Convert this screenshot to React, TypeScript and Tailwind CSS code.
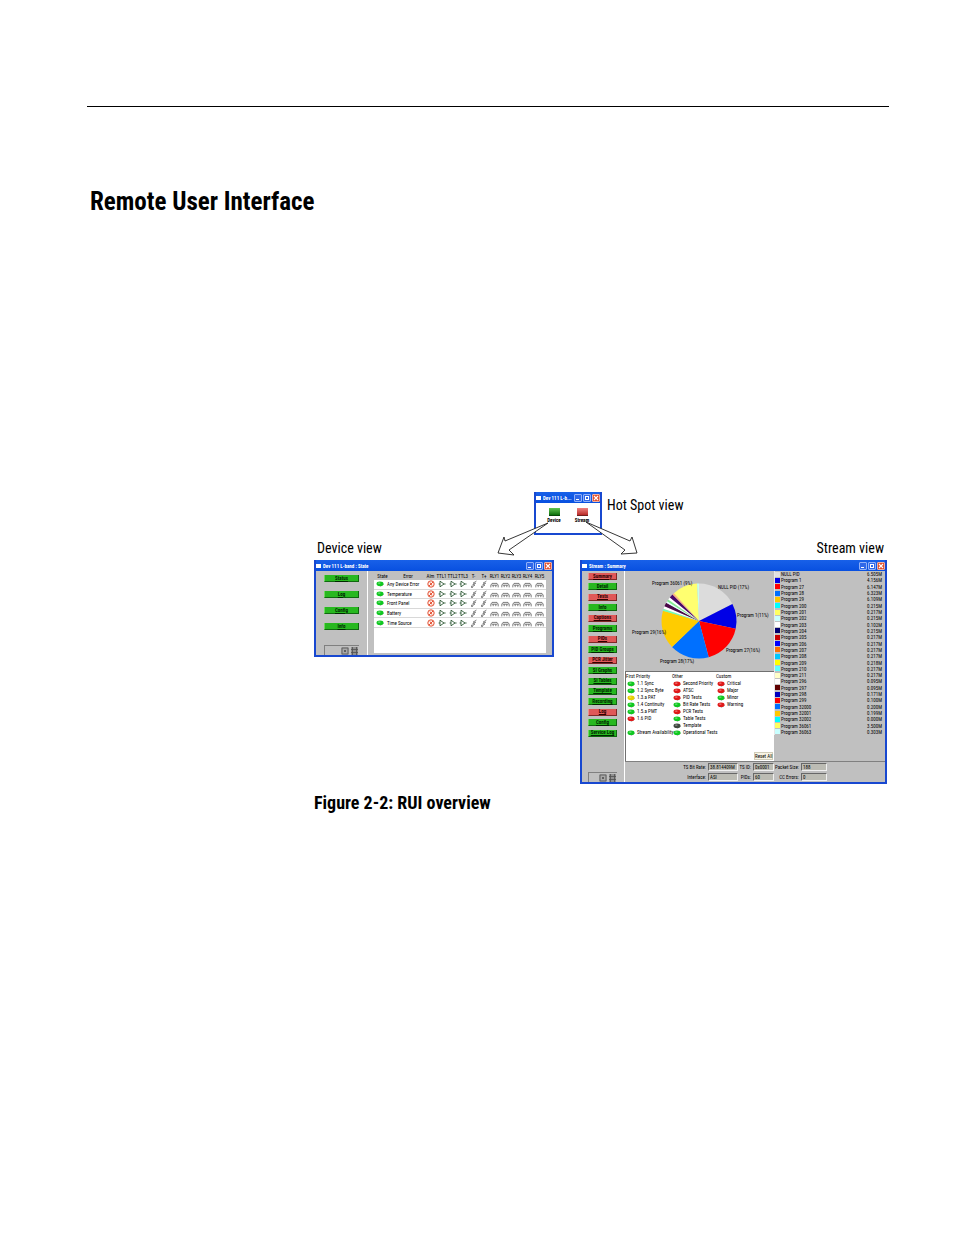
import type { ReactNode } from "react";

const legend = [
  { name: "NULL PID", rate: "6.505M", color: "#e0e0e0" },
  { name: "Program 1", rate: "4.156M", color: "#0000e6" },
  { name: "Program 27", rate: "6.147M", color: "#ff0000" },
  { name: "Program 28", rate: "6.323M", color: "#0070ff" },
  { name: "Program 29", rate: "6.109M", color: "#ffc800" },
  { name: "Program 200", rate: "0.215M", color: "#00ffff" },
  { name: "Program 201", rate: "0.217M", color: "#ffff60" },
  { name: "Program 202", rate: "0.215M", color: "#c8ffff" },
  { name: "Program 203", rate: "0.102M", color: "#ffffff" },
  { name: "Program 204", rate: "0.215M", color: "#000070" },
  { name: "Program 205", rate: "0.217M", color: "#c80000" },
  { name: "Program 206", rate: "0.217M", color: "#0000ff" },
  { name: "Program 207", rate: "0.217M", color: "#ff7000" },
  { name: "Program 208", rate: "0.217M", color: "#00c8ff" },
  { name: "Program 209", rate: "0.218M", color: "#ffff00" },
  { name: "Program 210", rate: "0.217M", color: "#60ffff" },
  { name: "Program 211", rate: "0.217M", color: "#ffffc8" },
  { name: "Program 296", rate: "0.095M", color: "#ffffff" },
  { name: "Program 297", rate: "0.095M", color: "#600000" },
  { name: "Program 298", rate: "0.171M", color: "#0000c0" },
  { name: "Program 299", rate: "0.100M", color: "#ff0000" },
  { name: "Program 32000", rate: "0.200M", color: "#0070ff" },
  { name: "Program 32001", rate: "0.199M", color: "#ffc800" },
  { name: "Program 32002", rate: "0.000M", color: "#00ffff" },
  { name: "Program 36061", rate: "3.500M", color: "#ffff60" },
  { name: "Program 36063", rate: "0.303M", color: "#c8ffff" },
];

// start and end angle in degrees, clockwise from twelve o'clock
const slices: [number, number, string][] = [
  [0, 63, "#dcdcdc"],
  [63, 102, "#0000e6"],
  [102, 165, "#ff0000"],
  [165, 226, "#0070ff"],
  [226, 286, "#ffcc00"],
  [286, 289, "#70ffb0"],
  [289, 293, "#ffffff"],
  [293, 299, "#4a0848"],
  [299, 302, "#e8ffff"],
  [302, 305, "#80f090"],
  [305, 309, "#ffffff"],
  [309, 315, "#4a0868"],
  [315, 318, "#ffb080"],
  [318, 357, "#ffff70"],
  [357, 360, "#c8ffe8"],
];

const pieLabels = [
  { x: 27, y: 14, text: "Program 36061 (9%)" },
  { x: 93, y: 18, text: "NULL PID (17%)" },
  { x: 112, y: 46, text: "Program 1(11%)" },
  { x: 101, y: 81, text: "Program 27(16%)" },
  { x: 35, y: 92, text: "Program 28(17%)" },
  { x: 7, y: 63, text: "Program 29(16%)" },
];

const streamMenu = [
  { label: "Summary", alarm: true },
  { label: "Detail" },
  { label: "Tests", alarm: true },
  { label: "Info" },
  { label: "Captions", alarm: true },
  { label: "Programs" },
  { label: "PIDs", alarm: true },
  { label: "PID Groups" },
  { label: "PCR Jitter", alarm: true },
  { label: "SI Graphs" },
  { label: "SI Tables" },
  { label: "Template" },
  { label: "Recording" },
  { label: "Log", alarm: true },
  { label: "Config" },
  { label: "Service Log" },
];

const lamps = {
  green: "#10c820",
  red: "#e01818",
  yellow: "#e8d000",
  off: "#404840",
};

type LampColor = keyof typeof lamps;

const tests: { title: string; items: ([string, LampColor] | null)[] }[] = [
  {
    title: "First Priority",
    items: [
      ["1.1 Sync", "green"],
      ["1.2 Sync Byte", "green"],
      ["1.3.a PAT", "yellow"],
      ["1.4 Continuity", "green"],
      ["1.5.a PMT", "green"],
      ["1.6 PID", "red"],
      null,
      ["Stream Availability", "green"],
    ],
  },
  {
    title: "Other",
    items: [
      ["Second Priority", "red"],
      ["ATSC", "red"],
      ["PID Tests", "red"],
      ["Bit Rate Tests", "green"],
      ["PCR Tests", "red"],
      ["Table Tests", "green"],
      ["Template", "off"],
      ["Operational Tests", "green"],
    ],
  },
  {
    title: "Custom",
    items: [
      ["Critical", "red"],
      ["Major", "red"],
      ["Minor", "green"],
      ["Warning", "red"],
    ],
  },
];

const errors = ["Any Device Error", "Temperature", "Front Panel", "Battery", "Time Source"];

const deviceColumns = [
  { label: "State", width: "w-[17px]" },
  { label: "Error", width: "w-[34px]" },
  { label: "Alm", width: "w-[11px]" },
  { label: "TTL1", width: "w-[11px]" },
  { label: "TTL2", width: "w-[11px]" },
  { label: "TTL3", width: "w-[10px]" },
  { label: "T-", width: "w-[11px]" },
  { label: "T+", width: "w-[10px]" },
  { label: "RLY1", width: "w-[11px]" },
  { label: "RLY2", width: "w-[11px]" },
  { label: "RLY3", width: "w-[11px]" },
  { label: "RLY4", width: "w-[11px]" },
  { label: "RLY5", width: "w-[13px]" },
];

const fields = [
  { id: "bitrate", label: "TS Bit Rate:", value: "38.814409M" },
  { id: "tsid", label: "TS ID:", value: "0x0001" },
  { id: "packet", label: "Packet Size:", value: "188" },
  { id: "interface", label: "Interface:", value: "ASI" },
  { id: "pids", label: "PIDs:", value: "60" },
  { id: "cc", label: "CC Errors:", value: "0" },
];

function slicePath(from: number, to: number, cx: number, cy: number, r: number) {
  const at = (deg: number) => {
    const a = (deg * Math.PI) / 180;
    return `${(cx + r * Math.sin(a)).toFixed(2)} ${(cy - r * Math.cos(a)).toFixed(2)}`;
  };
  return `M${cx} ${cy}L${at(from)}A${r} ${r} 0 0 1 ${at(to)}Z`;
}

function Lamp({ color }: { color: LampColor }) {
  return (
    <svg viewBox="0 0 8 6" className="w-2 h-[6px] shrink-0">
      <path d="M1 3.4L4.4 5.8L7.6 3.8L7.6 3L4 1Z" fill="#505850" opacity="0.6" />
      <ellipse cx="4" cy="2.8" rx="3.5" ry="2.3" fill={lamps[color]} />
      <ellipse cx="3.2" cy="2.1" rx="1.5" ry="0.7" fill="#fff" opacity="0.45" />
    </svg>
  );
}

function AlarmIcon() {
  return (
    <svg viewBox="0 0 8 8" className="w-2 h-2 mx-auto" fill="none" stroke="#e04020" strokeWidth="0.9">
      <circle cx="4" cy="4" r="3.2" fill="#fff4ee" />
      <path d="M2 6L6 2M3 2.5L5 5.5" />
    </svg>
  );
}

function GateIcon() {
  return (
    <svg viewBox="0 0 8 8" className="w-2 h-2 mx-auto" fill="none" stroke="#184820" strokeWidth="0.8">
      <path d="M2 1.2L6 4L2 6.8ZM0.6 4H2M6 4H7.6" />
    </svg>
  );
}

function BoltIcon() {
  return (
    <svg viewBox="0 0 8 8" className="w-2 h-2 mx-auto" fill="none" stroke="#707070" strokeWidth="0.8">
      <path d="M6.5 1L3 3.2H5.8L2.5 5H5L1.5 7.4M1.5 7.4V5.8M1.5 7.4H3" />
    </svg>
  );
}

function RelayIcon() {
  return (
    <svg viewBox="0 0 9 8" className="w-[9px] h-2 mx-auto" fill="none" stroke="#606060" strokeWidth="0.8">
      <path d="M0.8 7.4V5.2L2 3.4H7L8.2 5.2V7.4M1.6 5.2H7.4M3.2 5.2V7.2M5.8 5.2V7.2" />
    </svg>
  );
}

function WindowButtons() {
  return (
    <div className="flex gap-px">
      <button aria-label="Minimize" className="w-2 h-2 border border-[#90b0f8] bg-[#3068e8] rounded-[1px] flex items-end p-px">
        <span className="w-[3px] h-px bg-white" />
      </button>
      <button aria-label="Maximize" className="w-2 h-2 border border-[#90b0f8] bg-[#3068e8] rounded-[1px] p-px">
        <span className="block h-full border border-white" />
      </button>
      <button aria-label="Close" className="w-2 h-2 border border-[#f0b0a0] bg-[#e05030] rounded-[1px]">
        <svg viewBox="0 0 6 6" className="w-full h-full" stroke="#fff" strokeWidth="1.1">
          <path d="M1 1L5 5M5 1L1 5" />
        </svg>
      </button>
    </div>
  );
}

function Window({ title, className, children }: { title: string; className: string; children: ReactNode }) {
  return (
    <section className={`flex flex-col border-2 border-t-0 border-[#1848d0] text-[5px] leading-[6px] ${className}`}>
      <header className="h-[11px] shrink-0 flex items-center gap-[2px] bg-linear-to-b from-[#1860e8] to-[#0850e0] text-white">
        <span className="w-[5px] h-1 bg-white shrink-0" />
        <h2 className="flex-1 font-bold whitespace-nowrap">{title}</h2>
        <WindowButtons />
      </header>
      {children}
    </section>
  );
}

function MenuButton({ label, alarm }: { label: string; alarm?: boolean }) {
  return (
    <button
      className={`block w-full h-[7px] leading-[5px] font-bold underline text-center whitespace-nowrap border border-t-0 ${
        alarm
          ? "bg-[#e05858] border-[#802828] border-l-[#f09090] text-[#300000]"
          : "bg-[#28b820] border-[#106810] border-l-[#70d860] text-[#002800]"
      }`}
    >
      {label}
    </button>
  );
}

function SizeSwitch() {
  return (
    <div className="h-[10px] flex justify-end items-center gap-[2px] border-t border-l border-[#808080]">
      <svg viewBox="0 0 8 8" className="w-2 h-2">
        <path d="M0 0H8V8H0Z" fill="#a8a8a8" />
        <path d="M1 1H7V7H1ZM3 3L5 5M5 3L3 5" fill="none" stroke="#606060" />
      </svg>
      <svg viewBox="0 0 8 8" className="w-2 h-2">
        <path d="M0 0H7V8H0Z" fill="#909090" />
        <path d="M1.5 0V8M5.5 0V8M0 2.5H7M0 5.5H7" fill="none" stroke="#505050" strokeWidth="0.8" />
      </svg>
    </div>
  );
}

function HotSpotWindow() {
  return (
    <Window title="Dev 111 L-b..." className="w-[68px] h-[43px] bg-white">
      <div className="flex-1 grid grid-cols-2 px-1 pt-[5px] font-bold text-center">
        <div>
          <span className="block w-[11px] h-2 mx-auto mb-px bg-linear-to-b from-[#60c850] to-[#087008] border-b border-[#084808]" />
          Device
        </div>
        <div>
          <span className="block w-[11px] h-2 mx-auto mb-px bg-linear-to-b from-[#f08080] to-[#b82828] border-b border-[#702020]" />
          Stream
        </div>
      </div>
    </Window>
  );
}

function DeviceWindow() {
  return (
    <Window title="Dev 111 L-band : State" className="w-[240px] h-[97px] bg-[#c0c0c0]">
      <div className="flex-1 flex min-h-0">
        <nav className="w-[52px] px-2 pt-1 flex flex-col gap-[9px] border-r border-white">
          {["Status", "Log", "Config", "Info"].map((label) => (
            <MenuButton key={label} label={label} />
          ))}
          <div className="mt-auto">
            <SizeSwitch />
          </div>
        </nav>
        <div className="flex-1 ml-[6px] mr-[6px] mb-[2px] bg-white">
          <table className="table-fixed w-full h-[57px]">
            <thead>
              <tr className="bg-[#c0c0c0] h-[9px]">
                {deviceColumns.map((c) => (
                  <th key={c.label} className={`${c.width} p-0 font-normal text-center whitespace-nowrap`}>
                    {c.label}
                  </th>
                ))}
              </tr>
            </thead>
            <tbody>
              {errors.map((name) => (
                <tr key={name} className="border-b border-[#d8d8d8]">
                  <td className="p-0 pl-[2px]"><Lamp color="green" /></td>
                  <td className="p-0 whitespace-nowrap">
                    <span className="block -ml-1">{name}</span>
                  </td>
                  <td className="p-0"><AlarmIcon /></td>
                  <td className="p-0"><GateIcon /></td>
                  <td className="p-0"><GateIcon /></td>
                  <td className="p-0"><GateIcon /></td>
                  <td className="p-0"><BoltIcon /></td>
                  <td className="p-0"><BoltIcon /></td>
                  {[1, 2, 3, 4, 5].map((n) => (
                    <td key={n} className="p-0"><RelayIcon /></td>
                  ))}
                </tr>
              ))}
            </tbody>
          </table>
        </div>
      </div>
    </Window>
  );
}

function Pie() {
  return (
    <svg viewBox="0 0 149 100" className="w-[149px] h-[100px]">
      {slices.map(([from, to, color]) => (
        <path key={from} d={slicePath(from, to, 74, 50, 37.5)} fill={color} />
      ))}
      {pieLabels.map((l) => (
        <text key={l.text} x={l.x} y={l.y} fontSize="5" fill="#000">
          {l.text}
        </text>
      ))}
    </svg>
  );
}

function TestPanel() {
  return (
    <div className="flex-1 relative bg-white border-t border-l border-[#707070] pt-px grid grid-cols-[46px_44px_1fr] content-start">
      {tests.map((group) => (
        <div key={group.title} className="leading-[7px] whitespace-nowrap">
          <h3 className="h-[7px]">{group.title}</h3>
          <ul>
            {group.items.map((item, i) => (
              <li key={i} className="h-[7px] flex items-center gap-[2px] pl-px">
                {item && (
                  <>
                    <Lamp color={item[1]} />
                    {item[0]}
                  </>
                )}
              </li>
            ))}
          </ul>
        </div>
      ))}
      <button className="absolute right-px bottom-px w-[19px] h-2 leading-[6px] whitespace-nowrap bg-[#f8f4e4] border border-[#d0ccb8]">
        Reset All
      </button>
    </div>
  );
}

function StreamWindow() {
  return (
    <Window title="Stream : Summary" className="flex-1 h-[224px] bg-[#c0c0c0]">
      <div className="flex-1 flex min-h-0">
        <nav className="w-[43px] pl-[6px] pr-[7px] pt-[2px] flex flex-col border-r border-white">
          <div className="h-[164px] flex flex-col justify-between">
            {streamMenu.map((m) => (
              <MenuButton key={m.label} label={m.label} alarm={m.alarm} />
            ))}
          </div>
          <div className="mt-auto">
            <SizeSwitch />
          </div>
        </nav>
        <div className="flex-1 flex flex-col">
          <div className="flex-1 flex">
            <div className="w-[149px] flex flex-col">
              <Pie />
              <TestPanel />
            </div>
            <ul className="flex-1 h-[164px] flex flex-col border-l border-[#e8e8e8]">
              {legend.map((row) => (
                <li key={row.name} className="flex-1 min-h-0 flex items-center gap-px pr-[3px]">
                  <span className="w-[5px] h-[5px]" style={{ background: row.color }} />
                  <span className="flex-1">{row.name}</span>
                  <span>{row.rate}</span>
                </li>
              ))}
            </ul>
          </div>
          <form className="h-[21px] pt-px border-t border-[#808080] grid grid-cols-[81px_30px_11px_21px_23px_26px] gap-x-[2px] gap-y-[2px] content-start items-center">
            {fields.map((f) => (
              <div key={f.id} className="contents">
                <label htmlFor={f.id} className="flex justify-end whitespace-nowrap">
                  {f.label}
                </label>
                <input
                  id={f.id}
                  readOnly
                  defaultValue={f.value}
                  className="w-full min-w-0 h-2 px-px border border-[#f0f0f0] border-t-[#686868] border-l-[#686868] bg-[#bcbcb4]"
                />
              </div>
            ))}
          </form>
        </div>
      </div>
    </Window>
  );
}

export default function App() {
  return (
    <main className="bg-white min-h-screen pl-[87px] pr-[65px] pt-[106px] text-black font-['Roboto_Condensed','Roboto',sans-serif]">
      <hr className="border-black" />
      <h1 className="mt-[79px] ml-[3px] text-[25px] leading-8 font-bold">Remote User Interface</h1>

      <figure className="relative mt-[274px] ml-[227px] mr-[2px]">
        <div className="flex gap-[5px] pl-[220px]">
          <HotSpotWindow />
          <p className="text-sm leading-[26px]">Hot Spot view</p>
        </div>
        <div className="flex justify-between pt-1 pl-[3px] pr-[3px] pb-[3px] text-sm leading-[18px]">
          <p>Device view</p>
          <p>Stream view</p>
        </div>
        <div className="flex items-start gap-[26px]">
          <DeviceWindow />
          <StreamWindow />
        </div>

        {/* arrows from the hot spots down to their views */}
        <svg
          viewBox="0 0 150 42"
          className="absolute left-[180px] top-[25px] w-[150px] h-[42px]"
          fill="#fff"
          stroke="#202020"
          strokeWidth="0.9"
        >
          <path d="M54 6L11 24L10 20L4 36L20 38L15 33Z" />
          <path d="M92 5L136 24L138 20L143 36L127 37L131 33Z" />
        </svg>

        <figcaption className="mt-[9px] text-lg leading-5 font-bold">Figure 2-2: RUI overview</figcaption>
      </figure>
    </main>
  );
}
